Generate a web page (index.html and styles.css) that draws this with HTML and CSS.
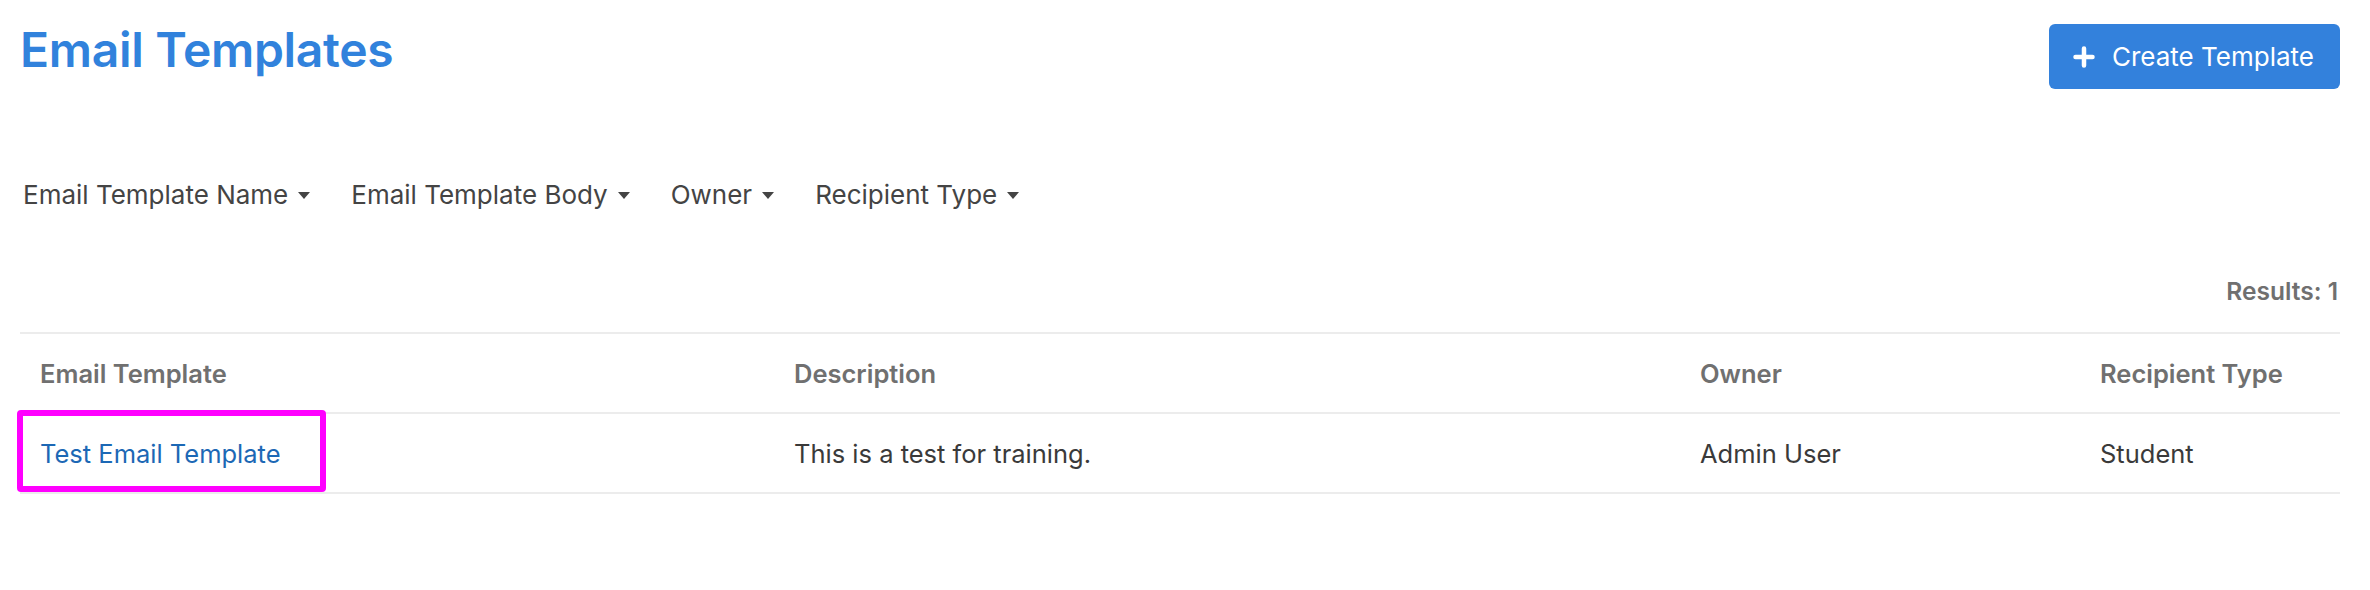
FILE: index.html
```html
<!DOCTYPE html>
<html lang="en">
<head>
  <meta charset="UTF-8" />
  <title>Email Templates</title>
  <link rel="stylesheet" href="styles.css">
</head>
<body>
  <div class="page">
    <header class="top">
      <h1 class="title">Email Templates</h1>
      <button class="btn-create">
        <svg width="22" height="22" viewBox="0 0 22 22"><path d="M11 2.5v17M2.5 11h17" stroke="#fff" stroke-width="4.5" stroke-linecap="round" fill="none"/></svg>
        <span>Create Template</span>
      </button>
    </header>

    <div class="filters">
      <span class="filter">Email Template Name <i class="caret"></i></span>
      <span class="filter">Email Template Body <i class="caret"></i></span>
      <span class="filter">Owner <i class="caret"></i></span>
      <span class="filter">Recipient Type <i class="caret"></i></span>
    </div>

    <div class="results">Results: 1</div>

    <div class="grid">
      <div class="row head">
        <div class="cell">Email Template</div>
        <div class="cell">Description</div>
        <div class="cell">Owner</div>
        <div class="cell">Recipient Type</div>
      </div>
      <div class="row">
        <div class="cell">
          <span class="mark"></span>
          <a href="#">Test Email Template</a>
        </div>
        <div class="cell">This is a test for training.</div>
        <div class="cell">Admin User</div>
        <div class="cell">Student</div>
      </div>
    </div>
  </div>
</body>
</html>
```

FILE: styles.css
```css
* { box-sizing: border-box; margin: 0; padding: 0; }
body { font-family: Inter, "Noto Sans", sans-serif; background: #fff; color: #3a3a3a; }
.page { padding: 21px 30px 0 20px; }

.top { display: flex; justify-content: space-between; align-items: flex-start; }
.title { font-size: 48px; line-height: 58px; font-weight: 600; color: #3182dc; letter-spacing: -0.3px; }
.btn-create { margin-top: 3px; height: 65px; display: flex; align-items: center; gap: 17px; padding: 0 26px 0 24px; background: #3381dc; color: #fff; border: none; border-radius: 6px; font-family: inherit; font-size: 26px; }

.filters { display: flex; gap: 41px; margin-top: 90px; padding-left: 3px; font-size: 26px; line-height: 31px; color: #444; }
.filter { display: flex; align-items: center; gap: 10px; }
.caret { width: 0; height: 0; border-left: 6.5px solid transparent; border-right: 6.5px solid transparent; border-top: 7px solid #444; margin-top: 2px; }

.results { margin-top: 67px; text-align: right; padding-right: 2px; font-size: 24.5px; line-height: 28px; font-weight: 600; color: #707070; }

.grid { margin-top: 27px; border-top: 2px solid #ececec; }
.row { display: grid; grid-template-columns: 754px 906px 400px 260px; height: 80px; border-bottom: 2px solid #ececec; align-items: center; font-size: 25.5px; }
.row.head { font-weight: 600; color: #707070; font-size: 25.5px; }
.cell { position: relative; padding-left: 20px; height: 100%; display: flex; align-items: center; }
.cell a { color: #1c68b5; text-decoration: none; }
.mark { position: absolute; left: -3px; top: -4px; width: 309px; height: 82px; border: 6px solid #ff00ff; border-radius: 4px; }
```
